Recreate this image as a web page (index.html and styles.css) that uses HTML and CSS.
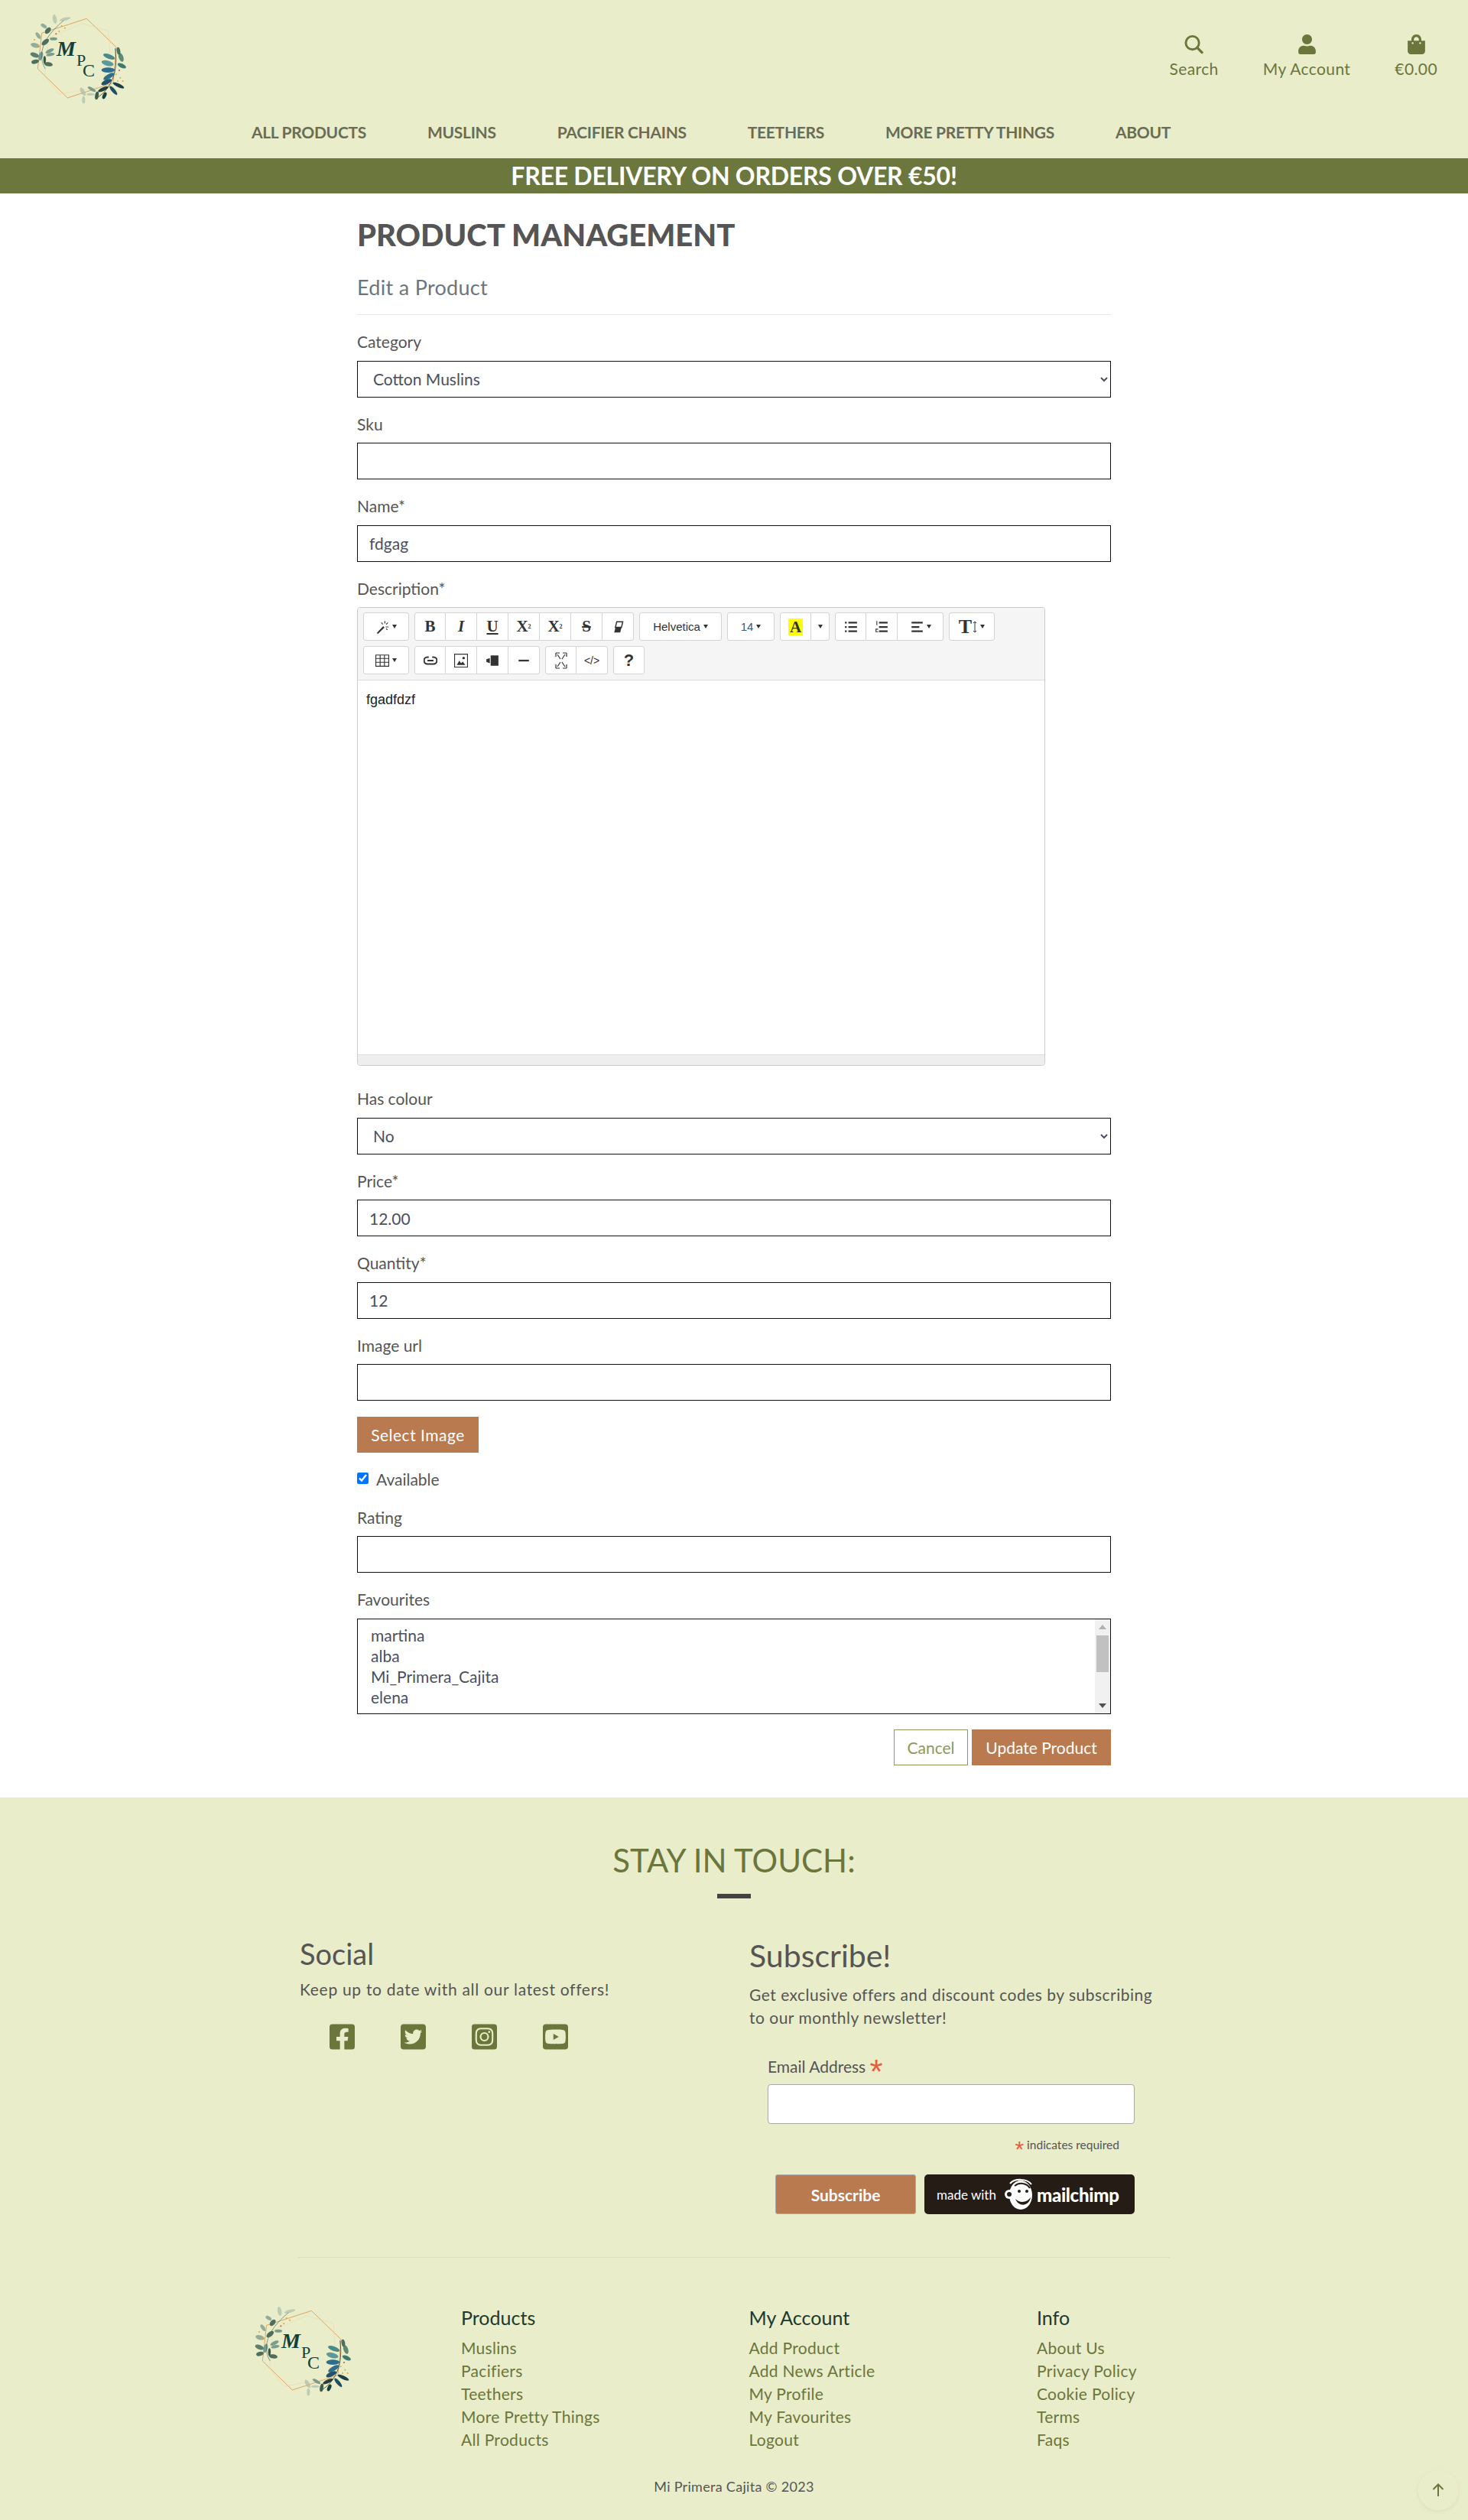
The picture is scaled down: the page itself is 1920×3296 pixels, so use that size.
FILE: index.html
```html
<!DOCTYPE html>
<html lang="en">
<head>
<meta charset="utf-8">
<title>Mi Primera Cajita</title>
<link rel="stylesheet" href="styles.css">
</head>
<body>
<svg class="defs" width="0" height="0" aria-hidden="true">
  <symbol id="logo" viewBox="0 0 160 130">
    <g transform="scale(.3333)">
    <polygon points="280,43 396,155 384,296 205,354 88,240 104,100" fill="none" stroke="#dba662" stroke-width="3"/>
    <polygon points="262,62 366,92 372,180 340,310 172,340 116,270 128,120" fill="none" stroke="#efd5a8" stroke-width="1.5"/>
    <g fill="#93ad9b">
      <ellipse cx="155" cy="45" rx="8" ry="18" transform="rotate(-10 155 45)" opacity=".5"/>
      <ellipse cx="195" cy="45" rx="22" ry="6" transform="rotate(-15 195 45)" opacity=".5"/>
      <ellipse cx="112" cy="72" rx="13" ry="7" transform="rotate(30 112 72)"/>
      <ellipse cx="128" cy="90" rx="15" ry="9" transform="rotate(-50 128 90)" fill="#4f6f5e"/>
      <ellipse cx="90" cy="110" rx="15" ry="7" transform="rotate(55 90 110)"/>
      <ellipse cx="150" cy="122" rx="15" ry="6" fill="#7a9c8c"/>
      <ellipse cx="118" cy="135" rx="17" ry="9" transform="rotate(-40 118 135)" fill="#4f6f5e"/>
      <ellipse cx="78" cy="148" rx="18" ry="9" transform="rotate(15 78 148)"/>
      <ellipse cx="135" cy="170" rx="18" ry="7" transform="rotate(-25 135 170)" fill="#7a9c8c"/>
      <ellipse cx="100" cy="190" rx="8" ry="18" transform="rotate(15 100 190)" fill="#6f9c9a"/>
      <ellipse cx="76" cy="186" rx="18" ry="9" transform="rotate(20 76 186)" fill="#5f7f6e"/>
      <ellipse cx="138" cy="184" rx="17" ry="6" transform="rotate(-10 138 184)" fill="#7a9c8c"/>
      <ellipse cx="78" cy="212" rx="15" ry="8" transform="rotate(-15 78 212)" fill="#4f6f5e"/>
      <ellipse cx="130" cy="222" rx="17" ry="8" transform="rotate(10 130 222)" fill="#4f6f5e"/>
      <ellipse cx="115" cy="205" rx="5" ry="15" fill="#2f5a4a"/>
    </g>
    <path d="M190 50C150 85 115 120 105 170C100 200 108 225 118 240" fill="none" stroke="#4f6f5e" stroke-width="2"/>
    <g fill="#e0a53a">
      <circle cx="195" cy="80" r="3"/><circle cx="182" cy="72" r="3"/><circle cx="172" cy="93" r="3"/><circle cx="75" cy="126" r="3"/><circle cx="85" cy="150" r="3"/>
      <circle cx="395" cy="262" r="3"/><circle cx="412" cy="275" r="3"/><circle cx="422" cy="288" r="3"/><circle cx="402" cy="288" r="3"/>
    </g>
    <circle cx="160" cy="103" r="3" fill="#c8552c"/>
    <circle cx="408" cy="246" r="3" fill="#c8552c"/>
    <path d="M392 160C400 220 395 280 350 330C335 345 325 350 315 360" fill="none" stroke="#263f38" stroke-width="2.4"/>
    <g fill="#2f6d8f">
      <ellipse cx="415" cy="195" rx="9" ry="18" transform="rotate(-20 415 195)" fill="#5c8a72"/>
      <ellipse cx="405" cy="170" rx="7" ry="15" transform="rotate(-10 405 170)" fill="#4f6f5e"/>
      <ellipse cx="368" cy="192" rx="24" ry="9" transform="rotate(20 368 192)" fill="#4a8a8a"/>
      <ellipse cx="362" cy="218" rx="24" ry="10" transform="rotate(15 362 218)" fill="#5b9a9a"/>
      <ellipse cx="418" cy="228" rx="18" ry="8" transform="rotate(25 418 228)" fill="#3f7a70"/>
      <ellipse cx="364" cy="245" rx="26" ry="10"/>
      <ellipse cx="367" cy="270" rx="24" ry="9" transform="rotate(-30 367 270)"/>
      <ellipse cx="358" cy="292" rx="22" ry="9" transform="rotate(-25 358 292)" fill="#24506a"/>
      <ellipse cx="405" cy="305" rx="24" ry="7" transform="rotate(25 405 305)" fill="#1d3f4a"/>
      <ellipse cx="385" cy="325" rx="22" ry="7" transform="rotate(50 385 325)" fill="#1f4f63"/>
      <ellipse cx="345" cy="320" rx="22" ry="7" transform="rotate(-25 345 320)" fill="#263f38"/>
      <ellipse cx="320" cy="345" rx="7" ry="16" transform="rotate(10 320 345)" fill="#3f5d4a"/>
      <ellipse cx="350" cy="345" rx="7" ry="14" transform="rotate(25 350 345)" fill="#1d3f3a"/>
      <ellipse cx="300" cy="320" rx="18" ry="6" transform="rotate(30 300 320)" fill="#7a9c8c"/>
      <ellipse cx="265" cy="330" rx="8" ry="18" transform="rotate(-30 265 330)" fill="#a9bda6" opacity=".7"/>
      <ellipse cx="295" cy="340" rx="16" ry="5" fill="#a9bda6" opacity=".7"/>
      <ellipse cx="268" cy="362" rx="6" ry="14" fill="#a9bda6" opacity=".7"/>
    </g>
    </g>
  </symbol>
</svg>

<header class="site-header">
  <div class="header-top">
    <svg class="logo" viewBox="0 0 160 130" role="img" aria-label="MPC"><use href="#logo"/><text class="logo-m" x="54" y="63">M</text><text class="logo-p" x="80" y="76">P</text><text class="logo-c" x="88" y="90">C</text></svg>
    <div class="account">
      <a class="account-item">
        <svg class="account-icon" viewBox="0 0 26 26"><circle cx="11" cy="11" r="9" class="ring"/><path d="M17.500 17.500L24 24" class="ring-h"/></svg>
        <span>Search</span>
      </a>
      <a class="account-item">
        <svg class="account-icon" viewBox="0 0 448 512"><path d="M224 256c70.700 0 128-57.300 128-128S294.700 0 224 0 96 57.300 96 128s57.300 128 128 128zm89.600 32h-16.700c-22.200 10.200-46.900 16-72.900 16s-50.600-5.800-72.900-16h-16.700C60.200 288 0 348.200 0 422.400V464c0 26.500 21.500 48 48 48h352c26.500 0 48-21.500 48-48v-41.600c0-74.200-60.200-134.400-134.400-134.400z"/></svg>
        <span>My Account</span>
      </a>
      <a class="account-item">
        <svg class="account-icon" viewBox="0 0 448 512"><path d="M352 160v-32C352 57.420 294.579 0 224 0 153.420 0 96 57.420 96 128v32H0v272c0 44.183 35.817 80 80 80h288c44.183 0 80-35.817 80-80V160h-96zm-192-32c0-35.290 28.710-64 64-64s64 28.710 64 64v32H160v-32zm160 120c-13.255 0-24-10.745-24-24s10.745-24 24-24 24 10.745 24 24-10.745 24-24 24zm-192 0c-13.255 0-24-10.745-24-24s10.745-24 24-24 24 10.745 24 24-10.745 24-24 24z"/></svg>
        <span>€0.00</span>
      </a>
    </div>
  </div>
  <nav class="main-nav">
    <a>ALL PRODUCTS</a><a>MUSLINS</a><a>PACIFIER CHAINS</a><a>TEETHERS</a><a>MORE PRETTY THINGS</a><a>ABOUT</a>
  </nav>
</header>
<div class="banner">FREE DELIVERY ON ORDERS OVER €50!</div>

<main class="main">
  <h1 class="page-title">PRODUCT MANAGEMENT</h1>
  <h2 class="page-sub">Edit a Product</h2>
  <hr class="rule">
  <form>
    <div class="field"><label>Category</label>
      <select class="control select"><option>Cotton Muslins</option></select></div>
    <div class="field"><label>Sku</label><input class="control" type="text"></div>
    <div class="field"><label>Name*</label><input class="control" type="text" value="fdgag"></div>
    <div class="field field-editor"><label>Description*</label>
      <div class="editor">
        <div class="toolbar">
          <div class="tool-row">
            <div class="tool-group"><span class="tool w60">
              <svg class="ic" viewBox="0 0 16 16"><path d="M1.500 15L9 7l1.600 1.600L3 16z" fill="#333"/><path d="M11 1v3M14.500 3l-2 2M15 8h-3M7 3l1.500 2M12.500 10l1.500 1.500" stroke="#333" fill="none"/></svg><i class="caret"></i></span></div>
            <div class="tool-group">
              <span class="tool serif-b">B</span><span class="tool serif-i">I</span><span class="tool serif-u">U</span><span class="tool serif-b">X<sup>2</sup></span><span class="tool serif-b">X<sub>2</sub></span><span class="tool serif-s">S</span>
              <span class="tool"><svg class="ic" viewBox="0 0 16 16"><path d="M5.500 8L3.800 14.500h7L12.500 8z" fill="#333"/><path d="M6.800 2h7L12.300 8.500H5.200z" fill="#fff" stroke="#333" stroke-width="1.300"/></svg></span>
            </div>
            <div class="tool-group"><span class="tool w-font">Helvetica<i class="caret"></i></span></div>
            <div class="tool-group"><span class="tool w-size">14<i class="caret"></i></span></div>
            <div class="tool-group"><span class="tool"><b class="hl">A</b></span><span class="tool w24"><i class="caret nom"></i></span></div>
            <div class="tool-group">
              <span class="tool"><svg class="ic" viewBox="0 0 16 16"><path d="M5 2h10v2H5zM5 7h10v2H5zM5 12h10v2H5zM1 2h2v2H1zM1 7h2v2H1zM1 12h2v2H1z" fill="#333"/></svg></span>
              <span class="tool"><svg class="ic" viewBox="0 0 16 16"><path d="M5 2h10v2H5zM5 7h10v2H5zM5 12h10v2H5zM2 1h1v5H2zM1 10h3v1H2v2h2v1H1z" fill="#333"/></svg></span>
              <span class="tool w60"><svg class="ic" viewBox="0 0 16 16"><path d="M2 2h13v2H2zM2 7h9v2H2zM2 12h13v2H2z" fill="#333"/></svg><i class="caret"></i></span>
            </div>
            <div class="tool-group"><span class="tool w60 serif-t">T<svg class="ic-h" viewBox="0 0 6 16"><path d="M3 1v14M1 3l2-2 2 2M1 13l2 2 2-2" stroke="#333" fill="none"/></svg><i class="caret"></i></span></div>
          </div>
          <div class="tool-row">
            <div class="tool-group"><span class="tool w60"><svg class="ic" viewBox="0 0 16 16"><path d="M.5 1.500h15v13H.5zM.5 5.500h15M.5 10h15M5.500 1.500v13M10.500 1.500v13" stroke="#333" fill="none"/></svg><i class="caret"></i></span></div>
            <div class="tool-group">
              <span class="tool"><svg class="ic" viewBox="0 0 16 16"><path d="M6 4H4.500a4 4 0 0 0 0 8H11.500a4 4 0 0 0 0-8H10M4.500 8h7" stroke="#333" stroke-width="1.800" fill="none"/></svg></span>
              <span class="tool"><svg class="ic" viewBox="0 0 16 16"><path d="M.5 .5h15v15H.5z" stroke="#333" fill="none"/><path d="M3 13l3-5 2 3 2-2 3 4z" fill="#333"/><circle cx="11" cy="5" r="1.500" fill="#333"/></svg></span>
              <span class="tool"><svg class="ic" viewBox="0 0 16 16"><path d="M6 2h9v12H6zM1 6.500L5 5v6L1 9.500z" fill="#333"/></svg></span>
              <span class="tool"><svg class="ic" viewBox="0 0 16 16"><path d="M2 7h12v2H2z" fill="#333"/></svg></span>
            </div>
            <div class="tool-group">
              <span class="tool"><svg class="ic ic-tall" viewBox="0 0 16 22"><path d="M3 3l4 6M13 3l-4 6M3 19l4-6M13 19l-4-6M1 1h5M1 1v5M15 1h-5M15 1v5M1 21h5M1 21v-5M15 21h-5M15 21v-5" stroke="#333" stroke-width="1.200" fill="none"/></svg></span>
              <span class="tool code">&lt;/&gt;</span>
            </div>
            <div class="tool-group"><span class="tool help">?</span></div>
          </div>
        </div>
        <div class="editing">fgadfdzf</div>
        <div class="statusbar"></div>
      </div>
    </div>
    <div class="field"><label>Has colour</label>
      <select class="control select"><option>No</option></select></div>
    <div class="field"><label>Price*</label><input class="control" type="text" value="12.00"></div>
    <div class="field"><label>Quantity*</label><input class="control" type="text" value="12"></div>
    <div class="field"><label>Image url</label><input class="control" type="text"></div>
    <button type="button" class="btn btn-fill btn-select">Select Image</button>
    <div class="check"><input type="checkbox" checked><span>Available</span></div>
    <div class="field"><label>Rating</label><input class="control" type="text"></div>
    <div class="field field-list"><label>Favourites</label>
      <div class="list-wrap">
        <select class="control list" multiple>
          <option>martina</option><option>alba</option><option>Mi_Primera_Cajita</option><option>elena</option>
        </select>
        <div class="fake-scroll"><i class="arrow-up"></i><b class="thumb"></b><i class="arrow-down"></i></div>
      </div>
    </div>
    <div class="actions">
      <button type="button" class="btn btn-line">Cancel</button>
      <button type="button" class="btn btn-fill">Update Product</button>
    </div>
  </form>
</main>

<footer class="site-footer">
  <h2 class="stay">STAY IN TOUCH:</h2>
  <div class="stay-bar"></div>
  <div class="contact">
    <section class="social">
      <h3 class="contact-title">Social</h3>
      <p>Keep up to date with all our latest offers!</p>
      <div class="social-icons">
        <svg viewBox="0 0 448 512"><path d="M400 32H48A48 48 0 0 0 0 80v352a48 48 0 0 0 48 48h137.250V327.690h-63V256h63v-54.640c0-62.150 37-96.480 93.670-96.480 27.140 0 55.520 4.840 55.520 4.840v61h-31.270c-30.810 0-40.420 19.120-40.420 38.730V256h68.780l-11 71.690h-57.780V480H400a48 48 0 0 0 48-48V80a48 48 0 0 0-48-48z"/></svg>
        <svg viewBox="0 0 448 512"><path d="M400 32H48C21.500 32 0 53.500 0 80v352c0 26.500 21.500 48 48 48h352c26.500 0 48-21.500 48-48V80c0-26.500-21.500-48-48-48zm-48.900 158.800c.2 2.800.2 5.700.2 8.500 0 86.700-66 186.600-186.600 186.600-37.200 0-71.700-10.800-100.700-29.400 5.300.6 10.400.8 15.800.8 30.700 0 58.900-10.400 81.400-28-28.800-.6-53-19.500-61.300-45.500 10.100 1.500 19.200 1.500 29.600-1.200-30-6.100-52.500-32.500-52.500-64.400v-.8c8.700 4.900 18.900 7.900 29.600 8.300a65.447 65.447 0 0 1-29.200-54.600c0-12.200 3.200-23.400 8.900-33.100 32.300 39.800 80.800 65.800 135.200 68.600-9.300-44.500 24-80.600 64-80.600 18.900 0 35.900 7.900 47.900 20.700 14.800-2.800 29-8.300 41.600-15.800-4.900 15.200-15.100 28-28.600 36 13.100-1.400 25.800-5 37.500-10.100-8.900 13.100-20.100 24.700-32.900 34z"/></svg>
        <svg viewBox="0 0 448 512"><path d="M224,202.660A53.340,53.340,0,1,0,277.360,256,53.380,53.380,0,0,0,224,202.660Zm124.710-41a54,54,0,0,0-30.410-30.410c-21-8.290-71-6.430-94.300-6.430s-73.250-1.930-94.310,6.430a54,54,0,0,0-30.410,30.410c-8.280,21-6.430,71.050-6.430,94.330S91,329.260,99.320,350.330a54,54,0,0,0,30.410,30.410c21,8.290,71,6.430,94.310,6.430s73.240,1.930,94.300-6.430a54,54,0,0,0,30.410-30.410c8.350-21,6.430-71.050,6.430-94.330S357.100,182.740,348.750,161.670ZM224,338a82,82,0,1,1,82-82A81.900,81.900,0,0,1,224,338Zm85.380-148.300a19.140,19.140,0,1,1,19.130-19.140A19.100,19.100,0,0,1,309.420,189.740ZM400,32H48A48,48,0,0,0,0,80V432a48,48,0,0,0,48,48H400a48,48,0,0,0,48-48V80A48,48,0,0,0,400,32ZM382.880,322c-1.290,25.630-7.140,48.340-25.850,67s-41.400,24.630-67,25.850c-26.410,1.490-105.590,1.490-132,0-25.630-1.290-48.260-7.150-67-25.850s-24.630-41.420-25.850-67c-1.490-26.420-1.490-105.610,0-132,1.290-25.630,7.070-48.340,25.850-67s41.470-24.560,67-25.780c26.410-1.490,105.590-1.490,132,0,25.630,1.290,48.330,7.150,67,25.850s24.630,41.420,25.850,67.050C384.370,216.440,384.370,295.560,382.880,322Z"/></svg>
        <svg viewBox="0 0 448 512"><path d="M186.800 202.100l95.200 54.100-95.200 54.100V202.100zM448 80v352c0 26.500-21.500 48-48 48H48c-26.500 0-48-21.500-48-48V80c0-26.500 21.500-48 48-48h352c26.500 0 48 21.500 48 48zm-42 176.300s0-59.600-7.600-88.200c-4.200-15.800-16.500-28.200-32.200-32.400C337.900 128 224 128 224 128s-113.900 0-142.200 7.700c-15.700 4.200-28 16.600-32.200 32.400-7.600 28.500-7.600 88.200-7.600 88.200s0 59.600 7.600 88.200c4.200 15.800 16.500 27.700 32.200 31.900C110.100 384 224 384 224 384s113.900 0 142.200-7.700c15.700-4.200 28-16.100 32.200-31.900 7.600-28.500 7.600-88.100 7.600-88.100z"/></svg>
      </div>
    </section>
    <section class="subscribe">
      <h3 class="contact-title sub-title">Subscribe!</h3>
      <p>Get exclusive offers and discount codes by subscribing to our monthly newsletter!</p>
      <div class="mc">
        <label class="mc-label">Email Address <span class="star star-big">*</span></label>
        <input class="mc-input" type="email">
        <div class="mc-note"><span class="star star-small">*</span> indicates required</div>
        <div class="mc-actions">
          <button type="button" class="mc-btn">Subscribe</button>
          <div class="mc-badge">
            <span class="mc-made">made with</span>
            <svg class="mc-chimp" viewBox="0 0 40 44">
              <ellipse cx="22" cy="23" rx="15" ry="19" fill="#fff"/>
              <circle cx="7" cy="22" r="6" fill="#fff"/>
              <path d="M8 8C14 1 30 1 36 9" stroke="#fff" stroke-width="2" fill="none"/>
              <path d="M14 11C20 6 30 7 34 14" stroke="#241c15" stroke-width="2" fill="none"/>
              <circle cx="20" cy="18" r="2" fill="#241c15"/><circle cx="30" cy="18" r="2" fill="#241c15"/>
              <path d="M15 28C21 34 30 33 35 26C33 38 19 39 15 28z" fill="#241c15"/>
              <circle cx="7" cy="22" r="3" fill="#241c15"/>
            </svg>
            <span class="mc-name">mailchimp</span>
          </div>
        </div>
      </div>
    </section>
  </div>
  <hr class="footer-rule">
  <div class="footer-nav">
    <svg class="logo logo-foot" viewBox="0 0 160 130" role="img" aria-label="MPC"><use href="#logo"/><text class="logo-m" x="54" y="63">M</text><text class="logo-p" x="80" y="76">P</text><text class="logo-c" x="88" y="90">C</text></svg>
    <div class="foot-col"><h4>Products</h4><a>Muslins</a><a>Pacifiers</a><a>Teethers</a><a>More Pretty Things</a><a>All Products</a></div>
    <div class="foot-col"><h4>My Account</h4><a>Add Product</a><a>Add News Article</a><a>My Profile</a><a>My Favourites</a><a>Logout</a></div>
    <div class="foot-col"><h4>Info</h4><a>About Us</a><a>Privacy Policy</a><a>Cookie Policy</a><a>Terms</a><a>Faqs</a></div>
  </div>
  <p class="copyright">Mi Primera Cajita © 2023</p>
</footer>
<a class="to-top"><svg viewBox="0 0 16 18"><path d="M8 17V2M1.500 8L8 1.500 14.500 8" stroke="#6b763c" stroke-width="2" fill="none"/></svg></a>
</body>
</html>
```
FILE: styles.css
```css
* { box-sizing: border-box; }
html, body { margin: 0; padding: 0; }
body {
  position: relative;
  width: 1920px;
  height: 3296px;
  overflow: hidden;
  background: #fff;
  color: #555;
  font-family: Lato, "Open Sans", sans-serif;
  font-size: 21px;
}
.defs { position: absolute; }
.logo-m { font: italic 700 28px "Liberation Serif", serif; fill: #12403a; }
.logo-p { font: 400 22px "Liberation Serif", serif; fill: #12403a; }
.logo-c { font: 400 24px "Liberation Serif", serif; fill: #12403a; }

/* header */
.site-header { height: 207px; background: #e9edc9; }
.header-top { height: 150px; display: flex; justify-content: space-between; }
.logo { display: block; width: 160px; height: 130px; margin: 10px 0 0 20px; flex: none; }
.account { display: flex; gap: 58px; padding: 45px 40px 0 0; align-items: flex-start; }
.account-item { display: flex; flex-direction: column; align-items: center; color: #6b763c; font-size: 21px; line-height: 26px; letter-spacing: .4px; }
.account-icon { width: 25px; height: 26px; fill: #6b763c; margin-bottom: 6px; }
.ring { fill: none; stroke: #6b763c; stroke-width: 3; }
.ring-h { fill: none; stroke: #6b763c; stroke-width: 3.5; stroke-linecap: round; }
.main-nav { height: 57px; display: flex; justify-content: center; gap: 80px; padding: 10px 60px 0 0; }
.main-nav a { color: #6a6c55; font-size: 21px; line-height: 26px; font-weight: 700; letter-spacing: -.3px; }
.banner { height: 46px; background: #6b773d; color: #fff; text-align: center; font-size: 32px; line-height: 46px; font-weight: 700; letter-spacing: -.25px; }

/* main */
.main { width: 986px; height: 2098px; margin: 0 auto; padding-top: 30px; }
.page-title { margin: 0; font-size: 40px; line-height: 48px; font-weight: 900; color: #555; }
.page-sub { margin: 29px 0 0; font-size: 27px; line-height: 32px; font-weight: 400; color: #6c757d; letter-spacing: .3px; }
.rule { margin: 19px 0 24px; border: 0; border-top: 1px solid #e6e6e6; height: 0; }
.field { margin-bottom: 24px; }
.field label { display: block; font-size: 21px; line-height: 22px; height: 27.5px; margin-bottom: 8px; color: #555; }
.control { display: block; width: 100%; height: 48px; padding: 0 15px; border: 1px solid #111; border-radius: 0; background: #fff; color: #4a5060; font: 21px Lato, sans-serif; }
.select { padding-left: 16px; }
.field-editor { margin-bottom: 32px; }
.field-list { margin-bottom: 20.5px; }
.list-wrap { position: relative; }
.list { height: 125px; padding: 8px 24px 0 17px; overflow: hidden; }
.list option { padding: 0; line-height: 27px; min-height: 27px; }
.fake-scroll { position: absolute; top: 1px; right: 1px; bottom: 1px; width: 20px; background: #f1f1f1; }
.thumb { position: absolute; left: 2px; right: 2px; top: 21px; height: 48px; background: #c1c1c1; }
.arrow-up, .arrow-down { position: absolute; left: 5px; width: 0; height: 0; border: 5px solid transparent; }
.arrow-up { top: 7px; border-top: 0; border-bottom: 6px solid #b0b0b0; }
.arrow-down { bottom: 7px; border-bottom: 0; border-top: 6px solid #505050; }

/* editor */
.editor { width: 900px; height: 600px; border: 1px solid #ccc; border-radius: 4px; display: flex; flex-direction: column; }
.toolbar { height: 95px; flex: none; background: #f5f5f5; border-bottom: 1px solid #ddd; padding: 6px 0 0 7px; border-radius: 4px 4px 0 0; }
.tool-row { display: flex; gap: 7px; margin-bottom: 7px; }
.tool-group { display: flex; }
.tool { width: 41px; height: 37px; display: flex; align-items: center; justify-content: center; background: #fff; border: 1px solid #d4d4d4; border-left-width: 0; color: #333; font: 15px "Liberation Sans", sans-serif; }
.tool:first-child { border-left-width: 1px; border-radius: 3px 0 0 3px; }
.tool:last-child { border-radius: 0 3px 3px 0; }
.tool:only-child { border-radius: 3px; }
.w60 { width: 60px; }
.w24 { width: 24px; }
.w-font { width: 108px; color: #333; }
.w-size { width: 62px; color: #2a5a86; }
.ic { width: 18px; height: 18px; }
.ic-tall { height: 22px; }
.ic-h { width: 6px; height: 16px; margin-left: 1px; }
.caret { width: 0; height: 0; margin-left: 4px; border: 3.500px solid transparent; border-top: 5px solid #333; border-bottom: 0; }
.caret.nom { margin-left: 0; }
.serif-b, .serif-i, .serif-u, .serif-s, .serif-t, .hl { font-family: "Liberation Serif", serif; font-size: 21px; font-weight: 700; color: #333; }
.serif-i { font-style: italic; }
.serif-u { text-decoration: underline; }
.serif-s { text-decoration: line-through; }
.serif-t { font-size: 26px; }
.serif-b sup, .serif-b sub { font-size: 8px; }
.hl { background: #ff0; line-height: 22px; padding: 0 2px; }
.code { font-size: 14px; }
.help { font-size: 22px; font-weight: 700; }
.editing { flex: 1; padding: 13px 11px; background: #fff; color: #222; font: 18px/24px "Liberation Sans", sans-serif; }
.statusbar { height: 14px; flex: none; background: #eee; border-top: 1px solid #ddd; border-radius: 0 0 4px 4px; }

/* buttons */
.btn { display: block; height: 47px; border: 0; font: 21px Lato, sans-serif; cursor: pointer; }
.btn-fill { background: #b97a50; color: #fff; }
.btn-select { width: 159px; margin-top: -3px; letter-spacing: .5px; }
.btn-line { background: #fff; border: 1px solid #8a9a5b; color: #8a9a5b; width: 97px; }
.check { display: flex; align-items: center; height: 28px; margin: 20px 0 25.5px; color: #555; }
.check input { width: 15px; height: 15px; margin: -2px 10px 0 0; }
.actions { display: flex; justify-content: flex-end; gap: 5px; }
.actions .btn-fill { width: 182px; }

/* footer */
.site-footer { height: 945px; background: #e9edc9; padding-top: 57px; color: #555; }
.stay { margin: 0; text-align: center; font-size: 42px; line-height: 50px; font-weight: 400; color: #6b763c; }
.stay-bar { width: 44px; height: 6px; margin: 19px auto 0; background: #444; }
.contact { width: 1140px; height: 419px; margin: 50px auto 0; display: grid; grid-template-columns: 590px 550px; }
.contact-title { margin: 0; font-size: 38px; line-height: 44px; font-weight: 400; color: #555; }
.sub-title { font-size: 41px; line-height: 50px; }
.social p { margin: 11px 0 0; font-size: 21px; line-height: 28px; letter-spacing: .7px; }
.social { padding-left: 2px; }
.social-icons { display: flex; gap: 60px; margin: 29px 0 0 39px; }
.social-icons svg { width: 33px; height: 38px; fill: #6b763c; }
.subscribe p { margin: 11px 0 0; width: 535px; font-size: 21px; line-height: 30px; letter-spacing: .5px; }
.mc { width: 480px; margin: 35px 0 0 24px; }
.mc-label { display: block; height: 37px; font-size: 21px; line-height: 28px; white-space: nowrap; }
.star { color: #e85c41; font-family: "Liberation Sans", sans-serif; }
.star-big { font-size: 44px; line-height: 0; vertical-align: -14px; }
.star-small { font-size: 30px; line-height: 0; vertical-align: -10px; }
.mc-input { display: block; width: 100%; height: 52px; border: 1px solid #aaa; border-radius: 4px; background: #fff; }
.mc-note { height: 66px; padding: 15px 20px 0 0; text-align: right; font-size: 15.5px; line-height: 24px; }
.mc-actions { display: flex; gap: 11px; padding-left: 10px; }
.mc-btn { width: 184px; height: 52px; border: 1px solid #aaa; border-radius: 3px; background: #b97a50; color: #fff; font: 700 21px Lato, sans-serif; }
.mc-badge { width: 275px; height: 52px; border-radius: 5px; background: #241c15; color: #fff; display: flex; align-items: center; padding-left: 16px; }
.mc-made { font: 400 17px Lato, sans-serif; }
.mc-chimp { width: 40px; height: 44px; margin: 0 3px 0 10px; }
.mc-name { font: 900 24px Lato, sans-serif; letter-spacing: -.3px; }
.footer-rule { width: 1140px; margin: 0 auto; border: 0; border-top: 1px solid #dde2b9; height: 0; }
.footer-nav { width: 1292px; margin: 53px auto 0; display: grid; grid-template-columns: 289px 376.500px 376.500px auto; }
.logo-foot { margin: 2px 0 0; }
.foot-col { padding-top: 11px; }
.foot-col h4 { margin: 0 0 11px; font-size: 25px; line-height: 28px; font-weight: 400; color: #1d3a2f; }
.foot-col a { display: block; font-size: 21px; line-height: 30px; color: #6b763c; letter-spacing: .3px; }
.copyright { margin: 32px 0 0; text-align: center; font-size: 18px; line-height: 28px; letter-spacing: .3px; }
.to-top { position: absolute; left: 1855px; top: 3231px; width: 52px; height: 52px; border: 1px solid #f4ecc8; border-radius: 50%; display: flex; align-items: center; justify-content: center; box-shadow: 0 2px 6px rgba(0,0,0,.06); }
.to-top svg { width: 16px; height: 18px; }
```
